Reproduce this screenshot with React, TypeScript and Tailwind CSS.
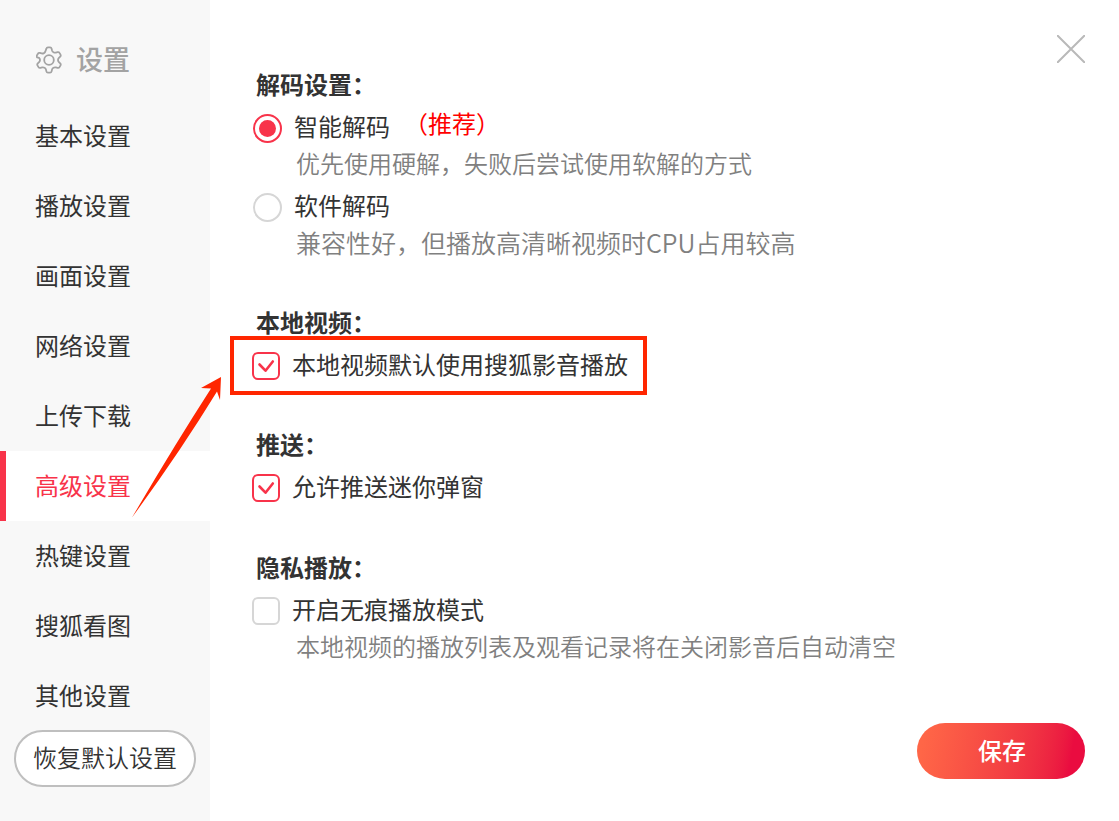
import React, { useState } from 'react';

interface OptionProps {
  type: 'radio' | 'checkbox';
  name: string;
  label: string;
  checked: boolean;
  onChange: () => void;
  hint?: string;
  hintSize?: string;
  children?: React.ReactNode;
}

const navItems = [
  '基本设置',
  '播放设置',
  '画面设置',
  '网络设置',
  '上传下载',
  '高级设置',
  '热键设置',
  '搜狐看图',
  '其他设置',
];

const GearIcon = () => (
  <svg viewBox="0 0 26 28" className="w-[26px] h-7 shrink-0" fill="none" stroke="#a3a3a3" strokeWidth="1.8" strokeLinejoin="round">
    <path d="M10.4 2.6Q10.7 1.3 12 1.3h2q1.3 0 1.6 1.3l.4 1.8q.3 1.2 1.5 1.9 1.1.6 2.3.3l1.8-.5q1.3-.3 1.9.8l1 1.7q.6 1.1-.3 2l-1.3 1.3q-.9.9-.9 2.1t.9 2.1l1.3 1.3q.9.9.3 2l-1 1.7q-.6 1.1-1.9.8l-1.8-.5q-1.2-.3-2.3.3-1.2.7-1.5 1.9l-.4 1.8q-.3 1.3-1.6 1.3h-2q-1.3 0-1.6-1.3l-.4-1.800q-.3-1.200-1.500-1.900-1.100-.6-2.300-.3l-1.800.5q-1.300.3-1.900-.8l-1-1.700q-.6-1.100.3-2l1.300-1.300q.9-.9.9-2.100t-.9-2.100L1.200 11.400q-.9-.9-.3-2l1-1.700q.6-1.100 1.900-.8l1.800.5q1.200.3 2.300-.3 1.200-.7 1.500-1.900z" />
    <circle cx="13" cy="14" r="4.8" />
  </svg>
);

const Heading: React.FC<{ children: React.ReactNode }> = ({ children }) => (
  <h2 className="h-[38px] pl-1 leading-9 font-bold">{children}</h2>
);

const Option: React.FC<OptionProps> = ({ type, name, label, checked, onChange, hint, hintSize, children }) => {
  const isRadio = type === 'radio';

  return (
    <div>
      <div className="relative flex w-fit h-12">
        <label className="flex items-center gap-3 cursor-pointer">
          <span className="relative flex">
            <input
              type={type}
              name={name}
              checked={checked}
              onChange={onChange}
              className={`
                appearance-none border-2 bg-white
                ${isRadio ? 'size-[29px] ml-px rounded-full' : 'size-7 rounded-md'}
                ${checked ? 'border-[#f8334a]' : 'border-[#d6d6d6]'}
              `}
            />
            {checked && isRadio && (
              <span className="absolute left-[7px] top-1.5 size-[17px] rounded-full bg-[#f8334a] pointer-events-none"></span>
            )}
            {checked && !isRadio && (
              <svg viewBox="0 0 28 28" className="absolute inset-0 size-7 pointer-events-none" fill="none" stroke="#f8334a" strokeWidth="2.6" strokeLinecap="round" strokeLinejoin="round">
                <path d="M7.5 12.5L13.5 18.7 20.8 9.5" />
              </svg>
            )}
          </span>
          <span className="pb-1">{label}</span>
        </label>
        {children}
      </div>
      {hint && (
        <p className={`h-[26px] pl-11 leading-[22px] font-[350] text-[#808080] ${hintSize ?? ''}`}>{hint}</p>
      )}
    </div>
  );
};

export default function App() {
  const [active, setActive] = useState('高级设置');
  const [decoder, setDecoder] = useState('smart');
  const [localDefault, setLocalDefault] = useState(true);
  const [push, setPush] = useState(true);
  const [incognito, setIncognito] = useState(false);

  return (
    <div className="relative flex min-h-screen bg-white text-2xl text-[#333] font-['Noto_Sans_CJK_SC',sans-serif]">
      <aside className="w-[210px] shrink-0 bg-[#f8f8f8]">
        <h1 className="flex items-center gap-3.5 h-[101px] pt-[18px] pl-9 text-[27px] font-medium text-[#a3a3a3]">
          <GearIcon />
          <span className="pb-0.5">设置</span>
        </h1>
        <nav>
          {navItems.map((item) => (
            <button
              key={item}
              onClick={() => setActive(item)}
              className={`
                block w-full h-[70px] border-l-6 pl-[29px] pb-0.5 text-left cursor-pointer
                ${item === active ? 'border-[#f8334a] bg-white text-[#f8334a]' : 'border-transparent'}
              `}
            >
              {item}
            </button>
          ))}
        </nav>
        <button className="block w-[182px] h-[57px] -mt-px ml-3.5 pb-1 rounded-full border-2 border-[#bfbfbf] bg-white font-[350] cursor-pointer">
          恢复默认设置
        </button>
      </aside>

      <main className="relative flex flex-col flex-1 pt-[66px] pl-[42px] pr-[34px] pb-[42px]">
        <button aria-label="关闭" className="absolute right-[34px] top-[35px] cursor-pointer">
          <svg viewBox="0 0 28 28" className="size-7" stroke="#b9b9b9" strokeWidth="2">
            <path d="M0 0L28 28M28 0L0 28" />
          </svg>
        </button>

        <section>
          <Heading>解码设置：</Heading>
          <Option
            type="radio"
            name="decoder"
            label="智能解码"
            checked={decoder === 'smart'}
            onChange={() => setDecoder('smart')}
            hint="优先使用硬解，失败后尝试使用软解的方式"
          >
            <span className="ml-3.5 leading-[38px] text-[#f00]">（推荐）</span>
          </Option>
          <div className="mt-[5px]">
            <Option
              type="radio"
              name="decoder"
              label="软件解码"
              checked={decoder === 'soft'}
              onChange={() => setDecoder('soft')}
              hint="兼容性好，但播放高清晰视频时CPU占用较高"
              hintSize="text-[25px]"
            />
          </div>
        </section>

        <section className="mt-[47px]">
          <Heading>本地视频：</Heading>
          <Option
            type="checkbox"
            name="localDefault"
            label="本地视频默认使用搜狐影音播放"
            checked={localDefault}
            onChange={() => setLocalDefault(!localDefault)}
          >
            {/* Callout frame and arrow */}
            <div className="absolute -left-[22px] -right-[19px] -top-[6px] -bottom-[5px] border-4 border-[#ff2600] pointer-events-none"></div>
            <svg viewBox="0 0 90 142" className="absolute -left-[120px] top-[34px] w-[90px] h-[142px] pointer-events-none" fill="#ff2600">
              <path d="M89 1L69 12 79 12.5Q42 70 0 141.5Q48 76 85 15.500L88 24z" />
            </svg>
          </Option>
        </section>

        <section className="mt-9">
          <Heading>推送：</Heading>
          <Option
            type="checkbox"
            name="push"
            label="允许推送迷你弹窗"
            checked={push}
            onChange={() => setPush(!push)}
          />
        </section>

        <section className="mt-[37px]">
          <Heading>隐私播放：</Heading>
          <Option
            type="checkbox"
            name="incognito"
            label="开启无痕播放模式"
            checked={incognito}
            onChange={() => setIncognito(!incognito)}
            hint="本地视频的播放列表及观看记录将在关闭影音后自动清空"
          />
        </section>

        <button className="mt-auto self-end w-[168px] h-14 pl-0.5 pb-0.5 rounded-full bg-linear-100 from-[#ff6647] from-5% to-[#ea0c40] to-90% text-white font-medium cursor-pointer">
          保存
        </button>
      </main>
    </div>
  );
}
